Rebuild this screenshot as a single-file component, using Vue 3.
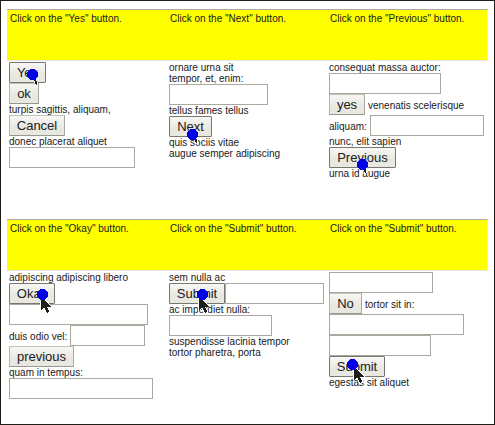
<script setup>
const t = (text) => [{ k: 'text', text }]
const b = (text, w, active = false) => ({ k: 'button', text, w, active })
const i = (w) => ({ k: 'input', w })
const s = (text, side) => ({ k: 'label', text, side })

const fullArrow = 'M1 1V14L4 11.500L7 17L9.500 16L7 10.500H10.500Z'
const arrowTail = 'M4.500 10L7 17L8.500 16L6.500 10Z'

const panels = [
  {
    target: 'Yes',
    rows: [[b('Yes', 37, true)], [b('ok', 30)], t('turpis sagittis, aliquam,'), [b('Cancel', 56)], t('donec placerat aliquet'), [i(126)]],
    dot: [25.5, 65.5], arrow: [22, 59], tail: true,
  },
  {
    target: 'Next',
    rows: [t('ornare urna sit'), t('tempor, et, enim:'), [i(99)], t('tellus fames tellus'), [b('Next', 43, true)], t('quis sociis vitae'), t('augue semper adipiscing')],
    dot: [25.5, 125.5], arrow: [22, 117], tail: true,
  },
  {
    target: 'Previous',
    rows: [t('consequat massa auctor:'), [i(112)], [b('yes', 36), s('venenatis scelerisque', 'after')], [s('aliquam:', 'before'), i(114)], t('nunc, elit sapien'), [b('Previous', 67, true)], t('urna id augue')],
    dot: [35.5, 155.5], arrow: [31, 147], tail: true,
  },
  {
    target: 'Okay',
    rows: [t('adipiscing adipiscing libero'), [b('Okay', 46, true)], [i(139)], [s('duis odio vel:', 'before'), i(75)], [b('previous', 65)], t('quam in tempus:'), [i(144)]],
    dot: [35.5, 75.5], arrow: [33, 77],
  },
  {
    target: 'Submit',
    rows: [t('sem nulla ac'), [b('Submit', 56, true), i(99)], t('ac imperdiet nulla:'), [i(103)], t('suspendisse lacinia tempor'), t('tortor pharetra, porta')],
    dot: [35.5, 75.5], arrow: [31, 77],
  },
  {
    target: 'Submit',
    rows: [[i(104)], [b('No', 33), s('tortor sit in:', 'after')], [i(135)], [i(102)], [b('Submit', 56, true)], t('egestas sit aliquet')],
    dot: [25.5, 145.5], arrow: [26, 147],
  },
]
</script>

<template>
  <main class="board">
    <section v-for="(p, n) in panels" :key="n" class="panel">
      <header class="query">Click on the "{{ p.target }}" button.</header>
      <div class="area">
        <div v-for="(row, r) in p.rows" :key="r" class="row">
          <template v-for="(c, j) in row" :key="j">
            <button v-if="c.k === 'button'" class="btn" :class="{ active: c.active }" :style="{ width: c.w + 'px' }">{{ c.text }}</button>
            <input v-else-if="c.k === 'input'" class="field" type="text" :style="{ width: c.w + 'px' }" />
            <span v-else :class="[c.k, c.side]">{{ c.text }}</span>
          </template>
        </div>
      </div>
      <svg class="pointer" width="160" height="210" viewBox="0 0 160 210" shape-rendering="crispEdges">
        <path
          :transform="`translate(${p.arrow[0]} ${p.arrow[1]})`"
          :d="p.tail ? arrowTail : fullArrow"
          fill="#20201a" stroke="#fff" stroke-width="1.4" paint-order="stroke"
        />
        <circle :cx="p.dot[0]" :cy="p.dot[1]" r="5.6" fill="#0000e6" />
      </svg>
    </section>
  </main>
</template>

<style>
body {
  margin: 0;
  background: #fff;
}
</style>

<style scoped>
.board {
  box-sizing: border-box;
  width: 495px;
  height: 425px;
  padding: 8px 6px 0;
  border: 1px solid #20201a;
  display: grid;
  grid-template-columns: repeat(3, 160px);
  grid-template-rows: repeat(2, 210px);
  overflow: hidden;
  font: 10px/11px "Liberation Sans", Arial, sans-serif;
  color: #20201a;
}
.panel {
  position: relative;
  height: 210px;
}
.query {
  box-sizing: border-box;
  height: 52px;
  padding: 3px 3px;
  border-top: 1px solid #aaa;
  border-bottom: 1px solid #e4e4e4;
  background: #ff0;
}
.panel:nth-child(3n) .query {
  border-right: 1px solid #eeeeda;
  width: 161px;
}
.area {
  padding: 1px 0 0 2px;
}
.row {
  display: flex;
  align-items: center;
  white-space: nowrap;
}
.text {
  height: 11px;
}
.label {
  padding-top: 2px;
}
.before {
  margin-right: 3px;
}
.after {
  margin-left: 3px;
}
.btn,
.field {
  box-sizing: border-box;
  flex: none;
  height: 21px;
  margin: 0;
  padding: 0;
  border: 1px solid #aaa9a0;
  border-radius: 0;
}
.field {
  background: #fff;
}
.btn {
  border-color: #c4c3bb #aaa9a0 #99988f #b5b4ac;
  background: linear-gradient(#f7f7f4, #e8e7e0 65%);
  color: #20201a;
  font: 13px/17px "Liberation Sans", Arial, sans-serif;
  text-align: center;
}
.btn.active {
  border-color: #77766f;
  border-radius: 1px;
}
.pointer {
  position: absolute;
  left: 0;
  top: 0;
}
</style>
